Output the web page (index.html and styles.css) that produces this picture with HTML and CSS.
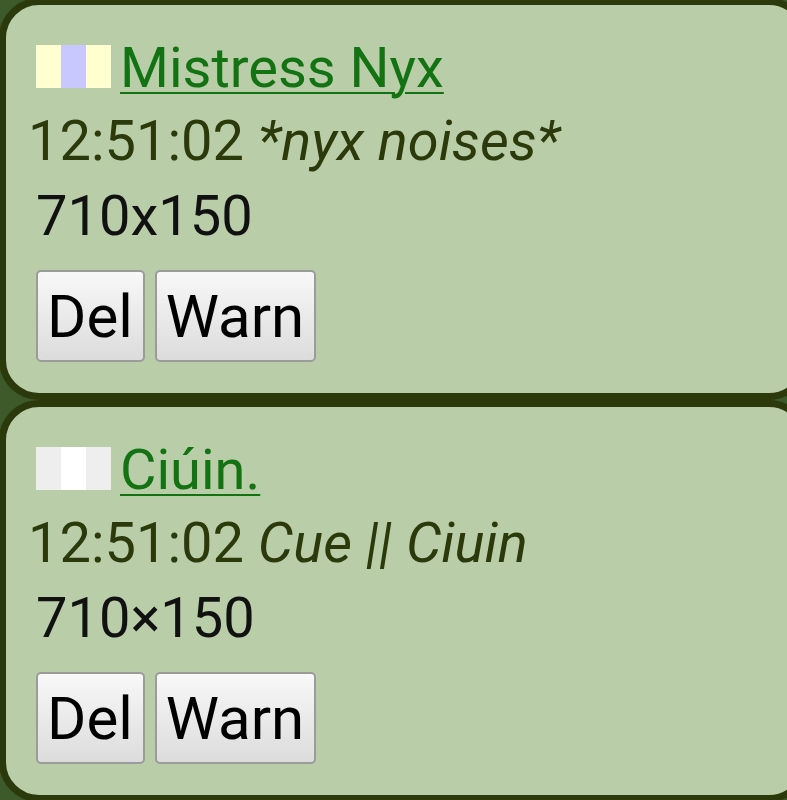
FILE: index.html
```html
<!DOCTYPE html>
<html>
<head>
<meta charset="utf-8">
<link rel="stylesheet" href="styles.css">
</head>
<body>
<div class="list">
  <div class="card">
    <div class="title"><span class="flag"><span class="s a1"></span><span class="s a2"></span><span class="s a1"></span></span><a class="name" href="#">Mistress Nyx</a></div>
    <div class="msg">12:51:02 <em>*nyx noises*</em></div>
    <div class="size">710x150</div>
    <div class="actions"><button class="btn">Del</button><button class="btn">Warn</button></div>
  </div>
  <div class="card">
    <div class="title"><span class="flag"><span class="s b1"></span><span class="s b2"></span><span class="s b1"></span></span><a class="name" href="#">Ciúin.</a></div>
    <div class="msg">12:51:02 <em>Cue || Ciuin</em></div>
    <div class="size">710×150</div>
    <div class="actions"><button class="btn">Del</button><button class="btn">Warn</button></div>
  </div>
</div>
</body>
</html>
```

FILE: styles.css
```css
html, body {
  margin: 0;
  padding: 0;
  overflow: hidden;
  background: #3d5a2b;
  font-family: Roboto, "Noto Sans", sans-serif;
}
.list {
  margin-top: -2px;
  margin-left: -1px;
  width: 810px;
}
.card {
  box-sizing: border-box;
  height: 402px;
  border: 7px solid #2b390b;
  border-radius: 40px;
  background: #b9cea8;
  padding: 26px 0 0 30px;
}
.title, .msg, .size {
  font-size: 56px;
  line-height: 74px;
  height: 74px;
  white-space: nowrap;
}
.msg {
  margin-top: -1px;
  margin-left: -8px;
  color: #2b390b;
}
.msg em { font-style: italic; }
.size {
  margin-top: 1px;
  color: #111;
}
.flag {
  display: inline-flex;
  vertical-align: -1px;
}
.s {
  display: block;
  width: 25px;
  height: 43px;
}
.a1 { background: #ffffd0; }
.a2 { background: #c8c8ff; }
.b1 { background: #eeeeee; }
.b2 { background: #ffffff; }
.name {
  margin-left: 9px;
  color: #137313;
  text-decoration: underline;
  text-decoration-thickness: 2px;
  text-underline-offset: 5px;
}
.actions {
  display: flex;
  gap: 10px;
  margin-top: 17px;
}
.btn {
  box-sizing: border-box;
  height: 92px;
  margin: 0;
  padding: 0 10px 0 9px;
  font-family: Roboto, "Noto Sans", sans-serif;
  font-size: 60px;
  color: #000;
  border: 2px solid #9b9b9b;
  border-radius: 5px;
  background: linear-gradient(#f8f8f8, #dcdcdc);
}
```
